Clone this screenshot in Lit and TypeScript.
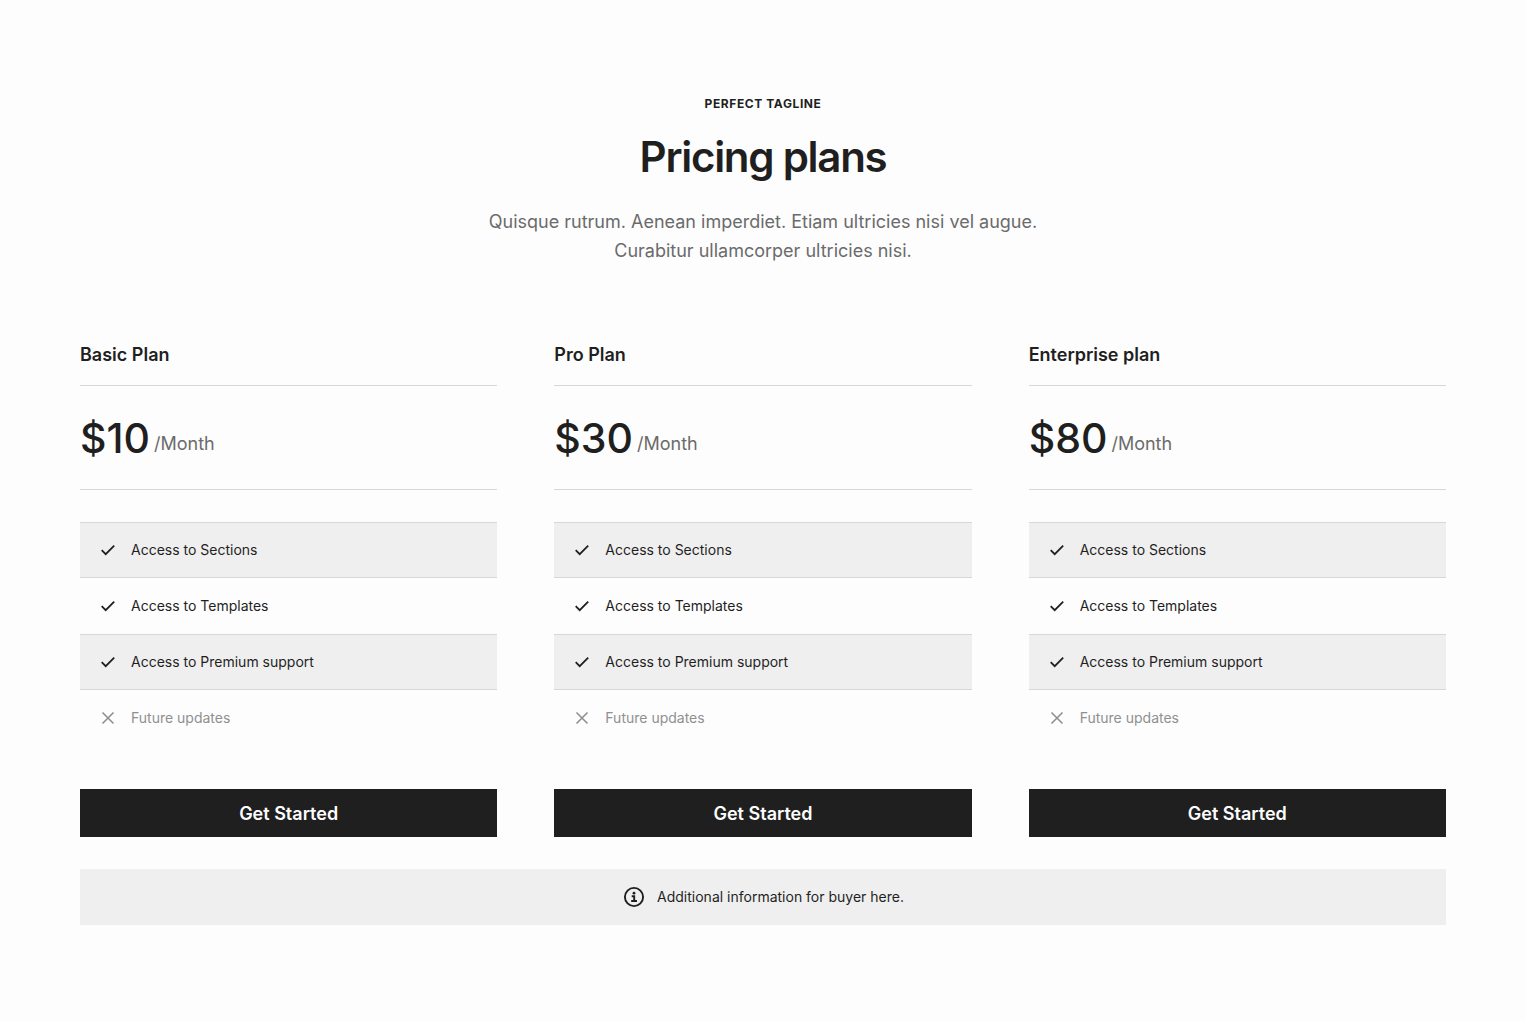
import { LitElement, html, css, svg } from "lit";
import { customElement, property } from "lit/decorators.js";

interface Feature {
  label: string;
  included: boolean;
}

interface Plan {
  name: string;
  price: string;
  features: Feature[];
}

const features: Feature[] = [
  { label: "Access to Sections", included: true },
  { label: "Access to Templates", included: true },
  { label: "Access to Premium support", included: true },
  { label: "Future updates", included: false },
];

const plans: Plan[] = [
  { name: "Basic Plan", price: "$10", features },
  { name: "Pro Plan", price: "$30", features },
  { name: "Enterprise plan", price: "$80", features },
];

const checkPath = svg`<path d="M1.7 8.2L5.7 12.2L14.2 3.7" />`;
const crossPath = svg`<path d="M2.5 2.5L13.5 13.5M13.5 2.5L2.5 13.5" />`;

@customElement("plan-card")
export class PlanCard extends LitElement {
  @property({ attribute: false }) plan!: Plan;

  static styles = css`
    :host {
      display: block;
      min-width: 0;
    }
    .name {
      margin: 0;
      padding-bottom: 16px;
      border-bottom: 1px solid #d7d7d7;
      font-size: 18px;
      line-height: 29px;
      font-weight: 600;
    }
    .price {
      display: flex;
      align-items: center;
      gap: 4px;
      margin: 0;
      padding: 25px 0 23px;
      border-bottom: 1px solid #d7d7d7;
    }
    .amount {
      font-size: 41px;
      line-height: 55px;
      font-weight: 500;
    }
    .period {
      padding-top: 10px;
      font-size: 18px;
      line-height: 29px;
      color: #6b6b6b;
    }
    .features {
      list-style: none;
      margin: 32px 0 43px;
      padding: 0;
    }
    .feature {
      display: flex;
      align-items: center;
      gap: 15px;
      box-sizing: border-box;
      min-height: 56px;
      padding: 16px 20px;
      font-size: 14px;
      line-height: 22px;
    }
    .feature:nth-child(odd) {
      background: #efefef;
      border-top: 1px solid #d7d7d7;
      border-bottom: 1px solid #d7d7d7;
    }
    .feature.excluded {
      color: #909090;
    }
    .icon {
      width: 16px;
      height: 16px;
      fill: none;
      stroke: currentColor;
      stroke-width: 1.8;
    }
    .excluded .icon {
      stroke-width: 1.6;
    }
    .start {
      display: block;
      width: 100%;
      padding: 13px 12px 11px;
      border: 0;
      background: #1f1f1f;
      color: #fdfdfd;
      font: 600 18px/24px Inter, sans-serif;
      cursor: pointer;
    }
  `;

  render() {
    const { name, price, features } = this.plan;
    return html`
      <h2 class="name">${name}</h2>
      <p class="price">
        <span class="amount">${price}</span>
        <span class="period">/Month</span>
      </p>
      <ul class="features">
        ${features.map(
          (f) => html`<li class="feature ${f.included ? "" : "excluded"}">
            <svg class="icon" viewBox="0 0 16 16" aria-hidden="true">
              ${f.included ? checkPath : crossPath}
            </svg>
            <span>${f.label}</span>
          </li>`
        )}
      </ul>
      <button class="start" type="button">Get Started</button>
    `;
  }
}

@customElement("app-root")
export class AppRoot extends LitElement {
  static styles = css`
    :host {
      display: block;
      box-sizing: border-box;
      min-height: 100vh;
      padding: 96px 80px;
      background: #fdfdfd;
      color: #1f1f1f;
      font-family: Inter, sans-serif;
    }
    .intro {
      margin-bottom: 75px;
      text-align: center;
    }
    .tagline {
      margin: 0 0 16px;
      font-size: 12px;
      line-height: 16px;
      font-weight: 700;
      letter-spacing: 0.05em;
      text-transform: uppercase;
    }
    .title {
      margin: 0 0 22px;
      font-size: 42px;
      line-height: 57px;
      font-weight: 600;
      letter-spacing: -0.03em;
    }
    .lead {
      max-width: 600px;
      margin: 0 auto;
      font-size: 18px;
      line-height: 29px;
      color: #6b6b6b;
    }
    .plans {
      display: grid;
      grid-template-columns: repeat(3, minmax(0, 1fr));
      gap: 57px;
    }
    .note {
      display: flex;
      align-items: center;
      justify-content: center;
      gap: 11px;
      margin-top: 32px;
      padding: 16px;
      background: #efefef;
      font-size: 14px;
      line-height: 24px;
    }
    .info {
      width: 24px;
      height: 24px;
    }
    @media (max-width: 800px) {
      .plans {
        grid-template-columns: minmax(0, 1fr);
      }
    }
  `;

  render() {
    return html`
      <header class="intro">
        <p class="tagline">Perfect tagline</p>
        <h1 class="title">Pricing plans</h1>
        <p class="lead">
          Quisque rutrum. Aenean imperdiet. Etiam ultricies nisi vel augue.
          Curabitur ullamcorper ultricies nisi.
        </p>
      </header>
      <main class="plans">
        ${plans.map((plan) => html`<plan-card .plan=${plan}></plan-card>`)}
      </main>
      <aside class="note">
        <svg class="info" viewBox="0 0 24 24" aria-hidden="true">
          <circle cx="12" cy="12" r="9.1" fill="none" stroke="currentColor" stroke-width="1.9" />
          <path d="M9.7 11.3H12.2V16M9.2 16H15" fill="none" stroke="currentColor" stroke-width="1.9" />
          <circle cx="12" cy="8.2" r="1.4" fill="currentColor" />
        </svg>
        <span>Additional information for buyer here.</span>
      </aside>
    `;
  }
}
